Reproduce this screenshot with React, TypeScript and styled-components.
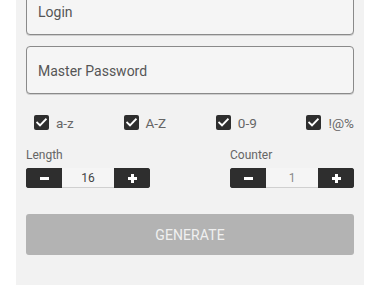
import React, { useState } from "react";
import styled, { createGlobalStyle } from "styled-components";

const Global = createGlobalStyle`
  html, body { margin: 0; padding: 0; background: #ffffff; overflow: hidden; }
  body { font-family: Roboto, "Liberation Sans", Arial, sans-serif; }
  * { box-sizing: border-box; }
`;

const Panel = styled.div`
  width: 348px;
  margin: -13px 0 0 16px;
  padding: 0 10px 40px;
  background: #f2f2f2;
  display: flex;
  flex-direction: column;
`;

const Field = styled.input<{ $gap?: number }>`
  height: 48px;
  width: 100%;
  margin-top: ${(p) => p.$gap ?? 0}px;
  padding: 2px 11px 0;
  border: 1px solid #8a8a8a;
  border-radius: 4px;
  background: #f5f5f5;
  font-family: Roboto, "Liberation Sans", Arial, sans-serif;
  font-size: 14px;
  color: #444;
  outline: none;
  box-shadow: 0 1px 0 #cfcfcf;
  &::placeholder { color: #555; }
`;

const CheckRow = styled.div`
  display: flex;
  justify-content: space-between;
  align-items: center;
  margin-top: 21px;
  padding-left: 8px;
  height: 15px;
`;

const CheckItem = styled.label`
  display: flex;
  align-items: center;
  gap: 7px;
  font-size: 13.5px;
  color: #666;
`;

const Box = styled.span`
  width: 15px;
  height: 15px;
  border-radius: 2px;
  background: #2e2e2e;
  display: flex;
  align-items: center;
  justify-content: center;
`;

const Steppers = styled.div`
  display: flex;
  justify-content: space-between;
  margin-top: 17px;
`;

const StepGroup = styled.div`
  display: flex;
  flex-direction: column;
  gap: 5px;
`;

const StepLabel = styled.div`
  font-size: 12px;
  line-height: 16px;
  color: #666;
`;

const Stepper = styled.div`
  display: flex;
  height: 20px;
  width: 124px;
  border-radius: 3px;
  overflow: hidden;
  background: #2e2e2e;
`;

const StepBtn = styled.button`
  width: 36px;
  border: 0;
  padding: 0;
  background: #2e2e2e;
  display: flex;
  align-items: center;
  justify-content: center;
`;

const StepValue = styled.div<{ $light?: boolean }>`
  flex: 1;
  background: #f5f5f5;
  border-bottom: 1px solid #d0d0d0;
  display: flex;
  align-items: center;
  justify-content: center;
  font-size: 12px;
  color: ${(p) => (p.$light ? "#8a8a8a" : "#444")};
`;

const Generate = styled.button`
  margin-top: 26px;
  height: 41px;
  width: 100%;
  border: 0;
  border-radius: 3px;
  background: #b3b3b3;
  color: #f0f0f0;
  font-family: Roboto, "Liberation Sans", Arial, sans-serif;
  font-size: 14px;
  letter-spacing: 0.1px;
`;

const Check = () => (
  <svg width="11" height="9" viewBox="0 0 11 9">
    <path d="M1.2 4.6 L4 7.3 L9.8 1.4" fill="none" stroke="#fff" strokeWidth="1.9" strokeLinecap="square" />
  </svg>
);

const Minus = () => (
  <svg width="9" height="3" viewBox="0 0 9 3">
    <rect x="0" y="0" width="9" height="3" fill="#fff" />
  </svg>
);

const Plus = () => (
  <svg width="9" height="9" viewBox="0 0 9 9">
    <rect x="0" y="3" width="9" height="3" fill="#fff" />
    <rect x="3" y="0" width="3" height="9" fill="#fff" />
  </svg>
);

const StepperCtl = ({ label, value, light }: { label: string; value: number; light?: boolean }) => (
  <StepGroup>
    <StepLabel>{label}</StepLabel>
    <Stepper>
      <StepBtn><Minus /></StepBtn>
      <StepValue $light={light}>{value}</StepValue>
      <StepBtn><Plus /></StepBtn>
    </Stepper>
  </StepGroup>
);

export default function App() {
  const [sets] = useState(["a-z", "A-Z", "0-9", "!@%"]);
  return (
    <>
      <Global />
      <Panel>
        <Field placeholder="Login" />
        <Field $gap={11} placeholder="Master Password" />
        <CheckRow>
          {sets.map((s) => (
            <CheckItem key={s}>
              <Box><Check /></Box>
              {s}
            </CheckItem>
          ))}
        </CheckRow>
        <Steppers>
          <StepperCtl label="Length" value={16} />
          <StepperCtl label="Counter" value={1} light />
        </Steppers>
        <Generate>GENERATE</Generate>
      </Panel>
    </>
  );
}
